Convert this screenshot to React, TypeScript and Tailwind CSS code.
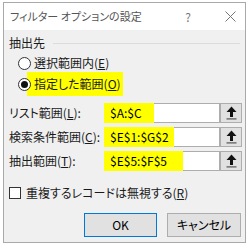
const jp = "font-['Segoe_UI','Noto_Sans_CJK_JP',sans-serif] [font-feature-settings:'palt']";

function Radio({ checked }: { checked?: boolean }) {
  return (
    <span className="relative z-10 w-[13px] h-[13px] rounded-full border border-[#333] bg-white flex items-center justify-center shrink-0">
      {checked && <span className="w-[7px] h-[7px] rounded-full bg-[#111]" />}
    </span>
  );
}

function UpButton() {
  return (
    <div className="w-[22px] h-full border border-[#adadad] bg-[#e1e1e1] flex items-center justify-center">
      <svg width="11" height="14" viewBox="0 0 11 14">
        <path d="M5.5 0.5 L10.5 6 L7 6 L7 11 L4 11 L4 6 L0.5 6 Z" fill="#111" />
        <rect x="0.5" y="12.3" width="10" height="1.2" fill="#555" />
      </svg>
    </div>
  );
}

function RangeRow({
  label,
  key2,
  value,
  hl,
}: {
  label: string;
  key2: string;
  value: string;
  hl: string;
}) {
  return (
    <div className="h-[20px] flex items-center">
      <div className="w-[95px] text-[12px] text-[#1a1a1a]">
        {label}(<span className="underline">{key2}</span>):
      </div>
      <div className="flex-1 h-full border border-[#adadad] bg-white flex">
        <span
          className={`${hl} -m-px h-[20px] bg-[#ffff00] flex items-center pl-[6px] text-[12px] text-black whitespace-nowrap`}
        >
          {value}
        </span>
      </div>
      <UpButton />
    </div>
  );
}

export default function App() {
  return (
    <div className={`w-[250px] h-[249px] bg-white overflow-hidden ${jp}`}>
      <div className="ml-[3px] mt-[2px] w-[243px] h-[241px] border border-[#a9a9a9] flex flex-col">
        <div className="h-[27px] bg-white flex items-center pl-[6px] pr-[9px] shrink-0">
          <span className="text-[11px] text-[#555] flex-1">フィルター オプションの設定</span>
          <span className="text-[12px] text-[#777] mr-[34px]">?</span>
          <svg width="11" height="11" viewBox="0 0 11 11">
            <path d="M0.5 0.5 L10.5 10.5 M10.5 0.5 L0.5 10.5" stroke="#777" strokeWidth="1" />
          </svg>
        </div>
        <div className="flex-1 bg-[#f0f0f0] pl-[5px] pr-[3px] flex flex-col">
          <div className="mt-[6px] h-[14px] flex items-center">
            <span className="text-[12px] text-[#1a1a1a]">抽出先</span>
            <span className="flex-1 h-px bg-[#dcdcdc] ml-[8px] mr-[2px]" />
          </div>
          <div className="mt-[5px] h-[16px] pl-[9px] flex items-center">
            <Radio />
            <span className="ml-[3px] text-[12px] text-[#1a1a1a]">
              選択範囲内(<span className="underline">E</span>)
            </span>
          </div>
          <div className="mt-[1px] h-[24px] pl-[9px] flex items-center">
            <Radio checked />
            <span className="-ml-[4px] pl-[7px] pr-[2px] h-[24px] bg-[#ffff00] flex items-center text-[12px] text-[#1a1a1a]">
              指定した範囲(<span className="underline">O</span>)
            </span>
          </div>
          <div className="mt-[7px] flex flex-col gap-[4px]">
            <RangeRow label="リスト範囲" key2="L" value="$A:$C" hl="w-[50px]" />
            <RangeRow label="検索条件範囲" key2="C" value="$E$1:$G$2" hl="w-[70px]" />
            <RangeRow label="抽出範囲" key2="T" value="$E$5:$F$5" hl="w-[79px]" />
          </div>
          <div className="mt-[15px] h-[14px] flex items-center">
            <span className="w-[12px] h-[12px] border border-[#333] bg-white" />
            <span className="ml-[5px] text-[12px] text-[#1a1a1a]">
              重複するレコードは無視する(<span className="underline">R</span>)
            </span>
          </div>
          <div className="mt-[13px] h-[24px] flex justify-end gap-[10px] mr-[1px]">
            <button className="w-[73px] h-full border border-[#0078d7] bg-[#e1e1e1] text-[12px] text-black">
              OK
            </button>
            <button className="w-[74px] h-full border border-[#adadad] bg-[#e1e1e1] text-[12px] text-black">
              キャンセル
            </button>
          </div>
        </div>
      </div>
    </div>
  );
}
